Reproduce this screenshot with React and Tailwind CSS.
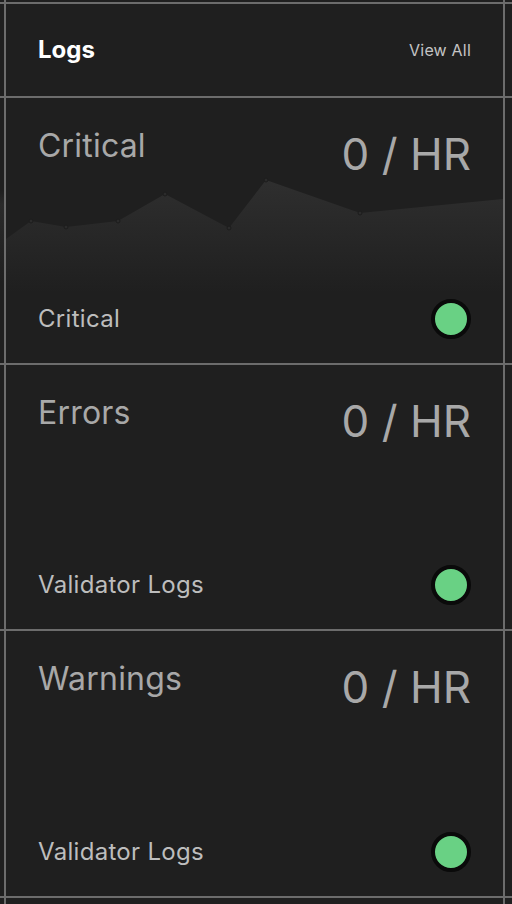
const panels = [
  { title: "Critical", rate: "0 / HR", label: "Critical", chart: true },
  { title: "Errors", rate: "0 / HR", label: "Validator Logs" },
  { title: "Warnings", rate: "0 / HR", label: "Validator Logs" },
];

const points = [
  [0, 141], [25, 123], [60, 129], [112, 123], [159, 96],
  [223, 130], [260, 82], [354, 115], [497, 101],
];

const Sparkline = () => {
  const line = points.map(([x, y]) => `${x},${y}`).join(" ");
  return (
    <svg className="absolute inset-0" width="497" height="265" viewBox="0 0 497 265">
      <defs>
        <linearGradient id="fade" x1="0" y1="80" x2="0" y2="195" gradientUnits="userSpaceOnUse">
          <stop offset="0" stopColor="#2f2f2f" />
          <stop offset="1" stopColor="#1f1f1f" />
        </linearGradient>
      </defs>
      <polygon points={`${line} 497,265 0,265`} fill="url(#fade)" />
      {points.slice(1, -1).map(([x, y]) => (
        <circle key={x} cx={x} cy={y} r="2" fill="#2b2b2b" stroke="#1c1c1c" strokeWidth="1" />
      ))}
    </svg>
  );
};

const StatusDot = () => (
  <span className="block h-10 w-10 rounded-full border-4 border-[#0a0a0a] bg-[#69d184]" />
);

const Panel = ({ title, rate, label, chart }) => (
  <div className="relative h-full bg-[#1f1f1f]">
    {chart && <Sparkline />}
    <div className="relative flex h-full flex-col justify-between px-8 pt-[30px] pb-6">
      <div className="flex items-start justify-between">
        <h2 className="text-[32px] leading-9 tracking-[0.2px] text-[#a8a8a8]">{title}</h2>
        <span className="mt-1 text-[44px] leading-none text-[#a8a8a8]">{rate}</span>
      </div>
      <div className="flex items-center justify-between">
        <span className="text-[24px] tracking-[0.3px] text-[#bdbdbd]">{label}</span>
        <StatusDot />
      </div>
    </div>
  </div>
);

const Cell = ({ children, className = "" }) => (
  <div className={`bg-[#1f1f1f] ${className}`}>{children}</div>
);

export default function App() {
  return (
    <div
      className="grid h-[904px] w-[512px] grid-cols-[4px_497px_7px] grid-rows-[2px_92px_265px_264px_265px_6px] gap-[2px] overflow-hidden bg-[#6c6c6c]"
      style={{ fontFamily: "Inter, 'Noto Sans', sans-serif" }}
    >
      {/* top edge */}
      <Cell />
      <Cell />
      <Cell />

      {/* header */}
      <Cell />
      <div className="flex items-center justify-between bg-[#1f1f1f] px-8">
        <h1 className="text-[24px] font-bold text-white">Logs</h1>
        <button className="text-[16px] tracking-[0.2px] text-[#c4c4c4]">View All</button>
      </div>
      <Cell />

      {panels.map((p, i) => (
        <div key={p.title} className="contents">
          <Cell className={i === 0 ? "bg-gradient-to-b from-[#1f1f1f] from-[35%] via-[#2a2a2a] via-[40%] to-[#1f1f1f] to-[70%]" : ""} />
          <Panel {...p} />
          <Cell />
        </div>
      ))}

      {/* bottom edge */}
      <Cell />
      <Cell />
      <Cell />
    </div>
  );
}
